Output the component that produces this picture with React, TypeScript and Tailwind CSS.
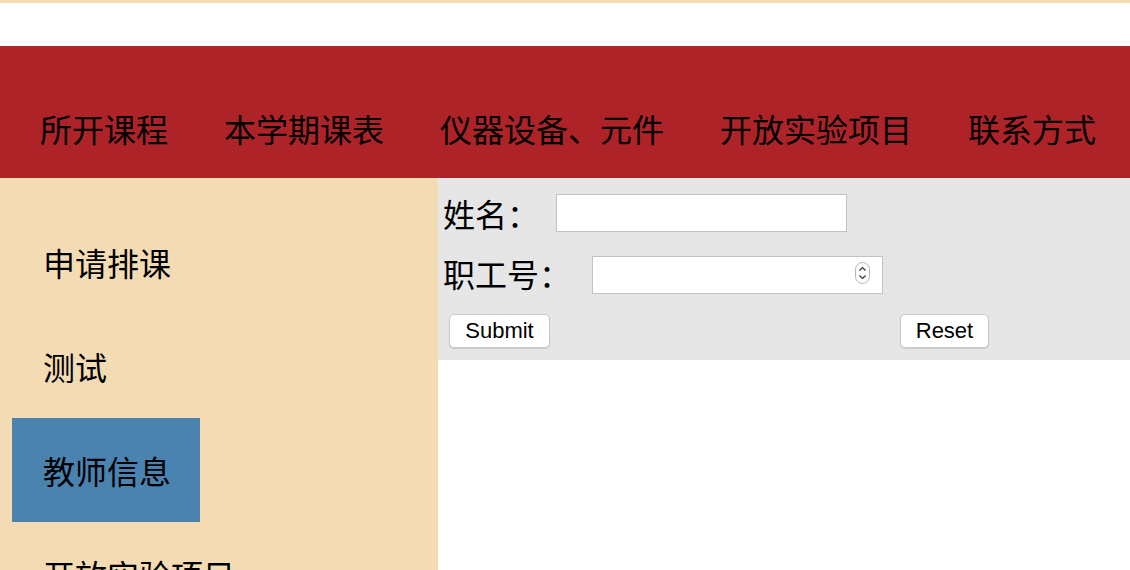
import React from 'react';

const navItems = ['所开课程', '本学期课表', '仪器设备、元件', '开放实验项目', '联系方式'];
const sideItems = ['申请排课', '测试', '教师信息', '开放实验项目'];

const Spinner = () => (
  <svg width="15" height="22" viewBox="0 0 15 22" className="absolute right-[13px] top-[6px]">
    <rect x="0.5" y="0.5" width="14" height="21" rx="7" fill="#fff" stroke="#b5b5b5" />
    <path d="M4.5 8.5 L7.5 5.5 L10.5 8.5" fill="none" stroke="#333" strokeWidth="1.2" />
    <path d="M4.5 13.5 L7.5 16.5 L10.5 13.5" fill="none" stroke="#333" strokeWidth="1.2" />
  </svg>
);

export default function App() {
  return (
    <div className="w-[1130px] h-[570px] overflow-hidden bg-white font-['Noto_Sans_CJK_SC',sans-serif] text-black">
      <div className="h-[3px] bg-[#f3dcb4]" />
      <div className="h-[43px]" />

      {/* top nav */}
      <nav className="h-[132px] bg-[#ad2328] flex items-end pb-[34px] pl-[12px]">
        {navItems.map((item) => (
          <a key={item} className="px-[28px] text-[32px] leading-none whitespace-nowrap">
            {item}
          </a>
        ))}
      </nav>

      <div className="flex">
        {/* side menu */}
        <aside className="w-[438px] h-[392px] bg-[#f3dcb4] pt-[32px] pl-[12px]">
          {sideItems.map((item) => (
            <div
              key={item}
              className={`w-[188px] h-[104px] flex items-center pl-[31px] text-[32px] leading-none whitespace-nowrap ${
                item === '教师信息' ? 'bg-[#4a82b0]' : ''
              }`}
            >
              {item}
            </div>
          ))}
        </aside>

        {/* form */}
        <main className="flex-1">
          <form className="bg-[#e6e6e6] pt-[16px] pb-[12px] pl-[5px]">
            <div className="flex items-center h-[38px]">
              <label className="text-[32px] leading-none">姓名：</label>
              <input type="text" className="ml-[17px] w-[291px] h-[38px] bg-white border border-[#c2c2c2] outline-none" />
            </div>
            <div className="flex items-center h-[38px] mt-[24px]">
              <label className="text-[32px] leading-none -mt-[4px]">职工号：</label>
              <div className="relative ml-[21px]">
                <input type="text" className="w-[291px] h-[38px] bg-white border border-[#c2c2c2] outline-none" />
                <Spinner />
              </div>
            </div>
            <div className="flex mt-[20px] pl-[6px] font-['Liberation_Sans',Arial,sans-serif]">
              <button
                type="button"
                className="w-[101px] h-[34px] bg-white border border-[#c8c8c8] rounded-[5px] shadow-[0_1px_1px_rgba(0,0,0,0.12)] text-[22px] leading-none"
              >
                Submit
              </button>
              <button
                type="button"
                className="ml-[350px] w-[89px] h-[34px] bg-white border border-[#c8c8c8] rounded-[5px] shadow-[0_1px_1px_rgba(0,0,0,0.12)] text-[22px] leading-none"
              >
                Reset
              </button>
            </div>
          </form>
        </main>
      </div>
    </div>
  );
}
